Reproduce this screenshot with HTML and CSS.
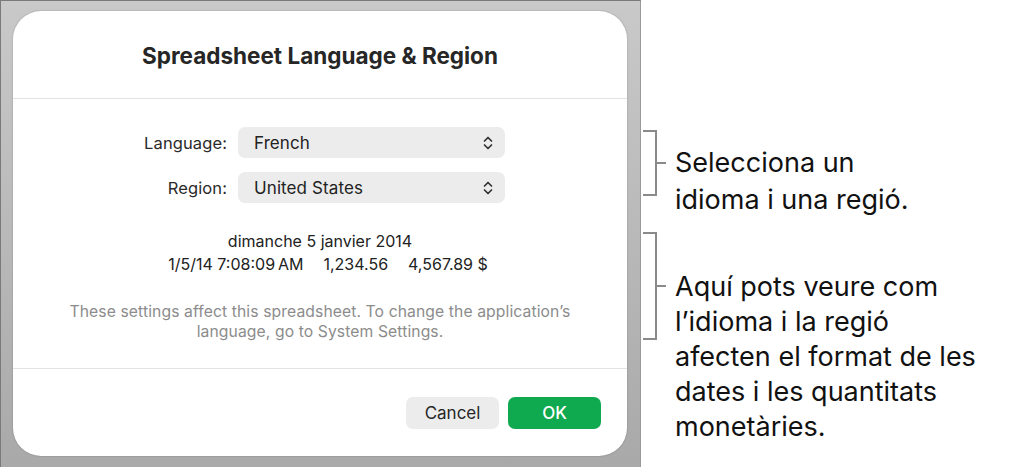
FILE: index.html
```html
<!DOCTYPE html>
<html lang="en">
  <head>
    <meta charset="UTF-8" />
    <meta name="viewport" content="width=device-width, initial-scale=1.0" />
    <title>Spreadsheet Language &amp; Region</title>

    <link rel="stylesheet" href="styles.css">
  </head>
  <body>
    <div class="stage">
      <div class="dialog">
        <div class="dialog-head">
          <h1>Spreadsheet Language &amp; Region</h1>
        </div>

        <div class="dialog-body">
          <div class="form">
            <label>Language:</label>
            <div class="select">
              <span>French</span>
              <svg viewBox="0 0 10 14" width="10" height="14"><path d="M1.5 5 5 1.5 8.5 5M1.5 9 5 12.5 8.5 9" /></svg>
            </div>
            <label>Region:</label>
            <div class="select">
              <span>United States</span>
              <svg viewBox="0 0 10 14" width="10" height="14"><path d="M1.5 5 5 1.5 8.5 5M1.5 9 5 12.5 8.5 9" /></svg>
            </div>
          </div>

          <div class="preview">
            <div>dimanche 5 janvier 2014</div>
            <div class="samples">
              <span>1/5/14 7:08:09&#8239;AM</span>
              <span>1,234.56</span>
              <span>4,567.89 $</span>
            </div>
          </div>

          <p class="note">These settings affect this spreadsheet. To change the application’s<br>language, go to System Settings.</p>
        </div>

        <div class="dialog-foot">
          <button class="btn">Cancel</button>
          <button class="btn btn-ok">OK</button>
        </div>
      </div>
    </div>

    <div class="notes">
      <div class="callout callout-1">
        <div class="bracket"></div>
        <p>Selecciona un<br>idioma i una regió.</p>
      </div>
      <div class="callout callout-2">
        <div class="bracket"></div>
        <p>Aquí pots veure com<br>l’idioma i la regió<br>afecten el format de les<br>dates i les quantitats<br>monetàries.</p>
      </div>
    </div>
  </body>
</html>
```

FILE: styles.css
```css
*,
*::before,
*::after {
  box-sizing: border-box;
  margin: 0;
  padding: 0;
}

body {
  display: flex;
  height: 100vh;
  overflow: hidden;
  background: #fff;
  font-family: Inter, "Liberation Sans", sans-serif;
  color: #222;
}

.stage {
  width: 641px;
  flex: none;
  padding: 10px 13px 11px 12px;
  background: linear-gradient(#c9c9c9, #a9a9a9);
  border-top: 1px solid #7a7a7a;
  border-left: 1px solid #7a7a7a;
  border-right: 1px solid #9a9a9a;
}

.dialog {
  height: 100%;
  background: #fff;
  border-radius: 28px;
  display: flex;
  flex-direction: column;
  box-shadow: 0 0 2px rgba(0, 0, 0, 0.25);
}

.dialog-head {
  height: 88px;
  display: grid;
  place-items: center;
  border-bottom: 1px solid #e3e3e3;
}

.dialog-head h1 {
  font-size: 22.5px;
  font-weight: 700;
  color: #262626;
  padding-top: 2px;
}

.dialog-body {
  flex: 1;
  border-bottom: 1px solid #e3e3e3;
  padding-top: 28px;
}

.form {
  display: grid;
  grid-template-columns: 214px 267px;
  column-gap: 11px;
  row-gap: 14px;
  align-items: center;
}

.form label {
  text-align: right;
  font-size: 16.5px;
  letter-spacing: 0.1px;
  color: #2a2a2a;
}

.select {
  height: 31px;
  border-radius: 7px;
  background: #ececec;
  display: flex;
  align-items: center;
  justify-content: space-between;
  padding: 0 12px 0 16px;
  font-size: 17px;
  letter-spacing: 0.1px;
  color: #222;
}

.select svg {
  fill: none;
  stroke: #333;
  stroke-width: 1.7;
  stroke-linecap: round;
  stroke-linejoin: round;
}

.preview {
  margin-top: 27px;
  text-align: center;
  font-size: 16px;
  line-height: 23px;
  color: #222;
}

.samples {
  display: flex;
  justify-content: center;
  gap: 20px;
  padding-left: 16px;
}

.note {
  margin-top: 26px;
  text-align: center;
  font-size: 15.7px;
  letter-spacing: 0.1px;
  line-height: 20px;
  color: #8c8c8c;
}

.dialog-foot {
  height: 87px;
  display: flex;
  justify-content: flex-end;
  align-items: flex-start;
  gap: 9px;
  padding: 28px 26px 0 0;
}

.btn {
  width: 93px;
  height: 32px;
  border: none;
  border-radius: 7px;
  background: #ececec;
  font-family: inherit;
  font-size: 17px;
  color: #262626;
}

.btn-ok {
  background: #0fa94f;
  color: #fff;
  font-weight: 500;
}

.notes {
  flex: 1;
  padding-left: 2px;
}

.callout {
  display: flex;
  align-items: flex-start;
}

.callout-1 {
  margin-top: 130px;
}

.callout-2 {
  margin-top: 14px;
}

.bracket {
  position: relative;
  width: 14px;
  flex: none;
  border: 2px solid #8a8a8a;
  border-left: none;
}

.bracket::after {
  content: "";
  position: absolute;
  left: 100%;
  top: calc(50% - 1px);
  width: 11px;
  height: 2px;
  background: #8a8a8a;
}

.callout-1 .bracket {
  height: 66px;
}

.callout-2 .bracket {
  height: 108px;
}

.callout p {
  margin-left: 18px;
  font-size: 27px;
  line-height: 35px;
  color: #111;
}

.callout-1 p {
  margin-top: 14px;
  line-height: 37px;
}

.callout-2 p {
  margin-top: 37px;
}
```
